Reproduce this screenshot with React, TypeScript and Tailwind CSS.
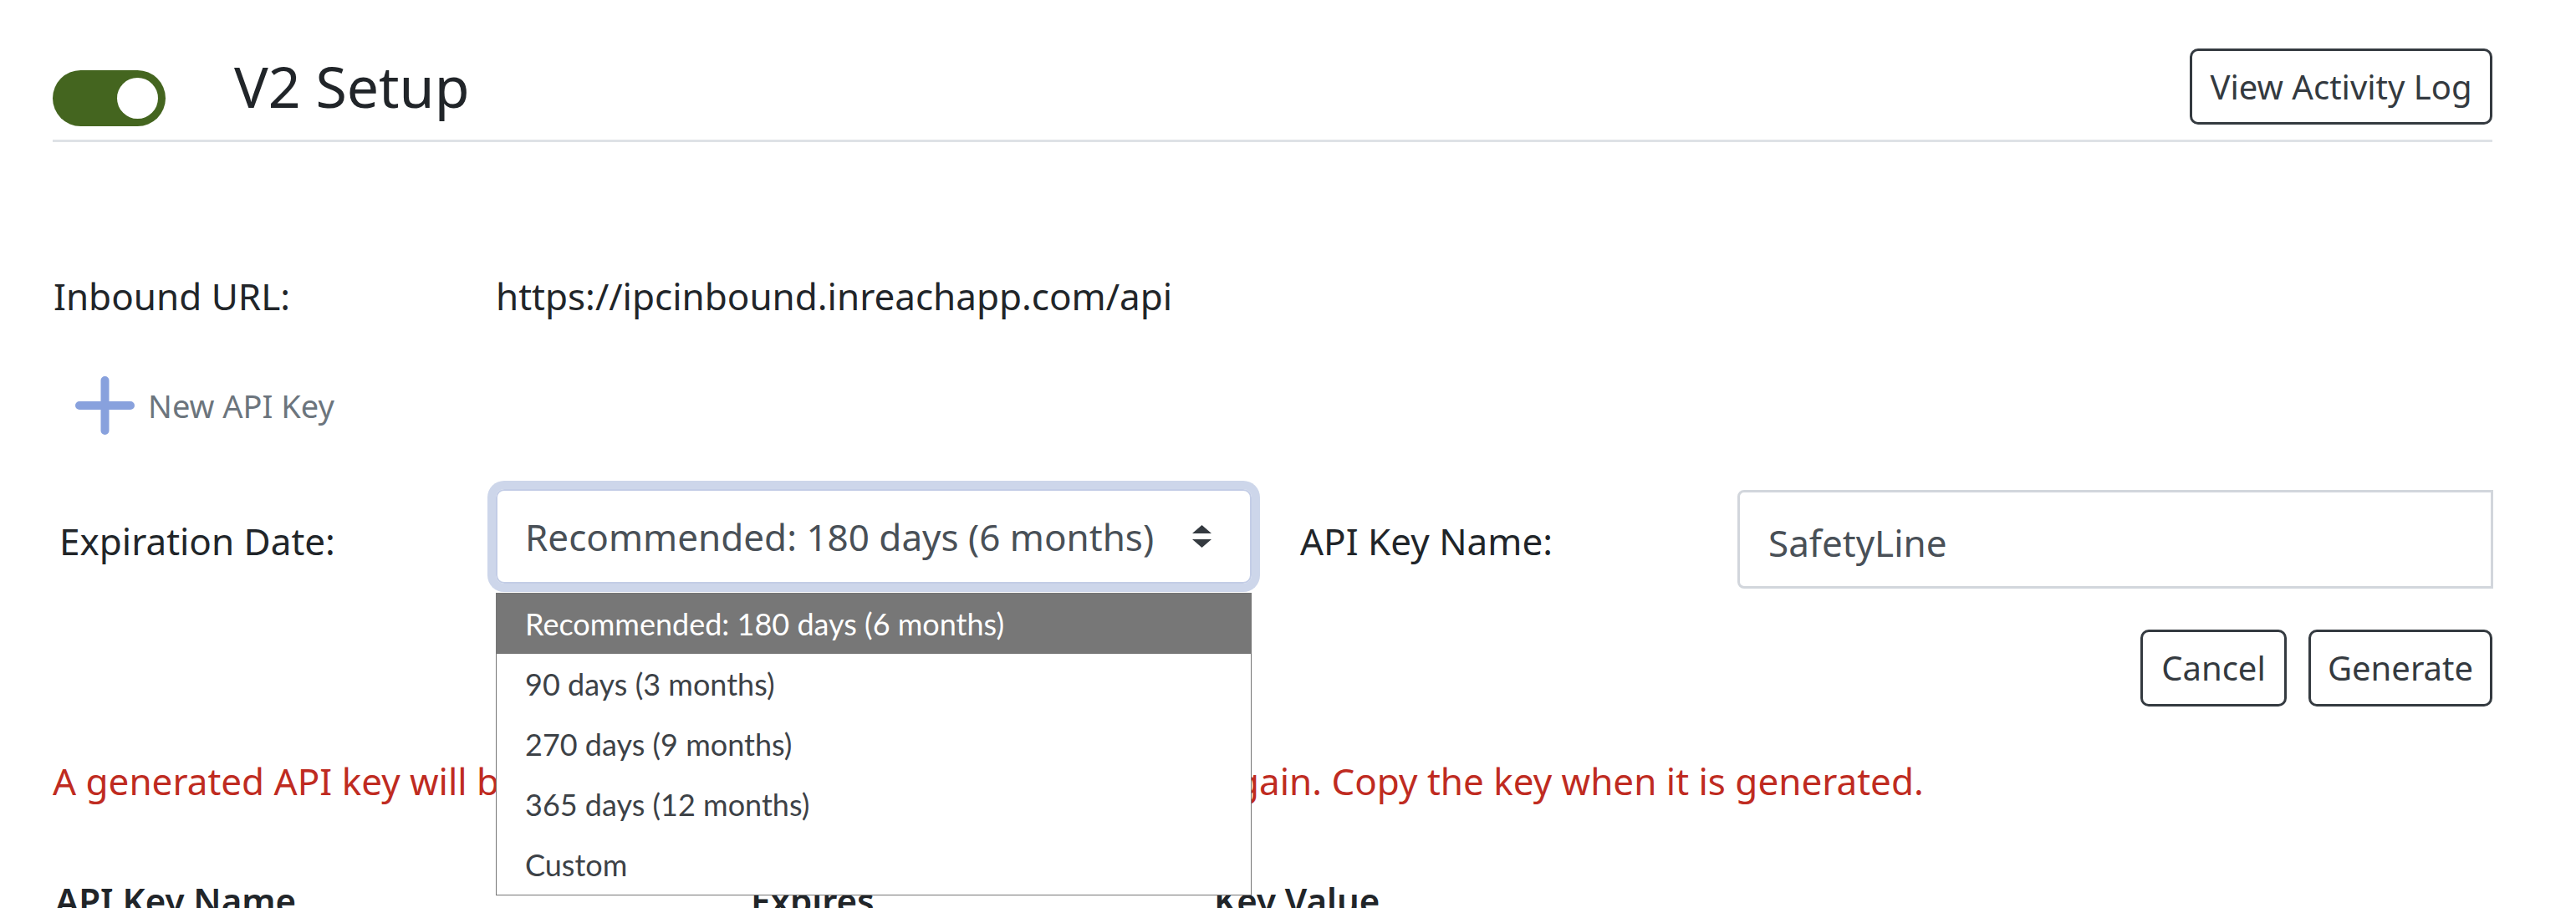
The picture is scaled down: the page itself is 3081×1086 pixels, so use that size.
const OPTIONS = [
  "Recommended: 180 days (6 months)",
  "90 days (3 months)",
  "270 days (9 months)",
  "365 days (12 months)",
  "Custom",
];

function Toggle() {
  return (
    <div className="mt-[26px] flex h-[67px] w-[135px] shrink-0 items-center justify-end rounded-full bg-[#44651f] pr-[9px]">
      <div className="h-[49px] w-[49px] rounded-full bg-white" />
    </div>
  );
}

function SortArrows() {
  return (
    <svg width="23" height="27" viewBox="0 0 23 27" className="shrink-0">
      <path d="M11.5 0 L23 10 L0 10 Z" fill="#343a40" />
      <path d="M0 17 L23 17 L11.5 27 Z" fill="#343a40" />
    </svg>
  );
}

function ExpirySelect() {
  return (
    <div className="relative w-[904px] shrink-0">
      <div className="flex h-[113px] items-center justify-between rounded-[10px] border-2 border-[#c3cde6] pl-[33px] pr-[46px] text-[44px] text-[#495057] shadow-[0_0_0_10px_#cdd6ea]">
        <span>Recommended: 180 days (6 months)</span>
        <SortArrows />
      </div>
      <ul className="absolute left-0 top-[124px] z-10 w-[904px] border border-[#767676] bg-white font-['Lato',sans-serif] text-[36px] leading-[72px] text-[#3d4247]">
        {OPTIONS.map((o, i) => (
          <li key={o} className={i === 0 ? "bg-[#777777] pl-[34px] text-white" : "pl-[34px]"}>
            {o}
          </li>
        ))}
      </ul>
    </div>
  );
}

export default function App() {
  return (
    <div className="min-h-screen bg-white font-['Noto_Sans',sans-serif] text-[#212529]">
      <div className="ml-[63px] w-[2918px] pt-[58px]">
        <header className="flex items-start border-b-[3px] border-[#dee2e6] pb-[16px]">
          <Toggle />
          <h1 className="ml-[82px] mt-[3px] text-[68px] leading-[84px]">V2 Setup</h1>
          <button className="ml-auto flex h-[91px] w-[362px] items-center justify-center rounded-[10px] border-[3px] border-[#343a40] text-[40px] text-[#343a40]">
            View Activity Log
          </button>
        </header>

        <div className="mt-[151px] flex text-[44px] leading-[66px]">
          <div className="w-[530px] pl-[1px]">Inbound URL:</div>
          <div>https://ipcinbound.inreachapp.com/api</div>
        </div>

        <button className="ml-[27px] mt-[63px] flex items-start gap-[16px] text-[38px] leading-[60px] text-[#6c757d]">
          <svg width="71" height="70" viewBox="0 0 71 70" className="shrink-0">
            <path d="M35.5 5 V65 M5 35 H66" stroke="#88a1dd" strokeWidth="10" strokeLinecap="round" fill="none" />
          </svg>
          <span className="mt-[5px]">New API Key</span>
        </button>

        <div className="mt-[65px] flex items-start pl-[8px] text-[44px] leading-[66px]">
          <div className="mt-[29px] w-[522px] shrink-0">Expiration Date:</div>
          <ExpirySelect />
          <div className="ml-[58px] mt-[29px] w-[523px] shrink-0">API Key Name:</div>
          <div className="mt-[1px] flex h-[118px] w-[904px] shrink-0 items-center rounded-l-[8px] border-[3px] border-[#d2d6dc] pl-[34px] pt-[7px] text-[#495057]">
            SafetyLine
          </div>
        </div>

        <div className="mt-[49px] flex justify-end gap-[26px] text-[40px] text-[#343a40]">
          <button className="h-[92px] w-[175px] rounded-[10px] border-[3px] border-[#343a40]">Cancel</button>
          <button className="h-[92px] w-[220px] rounded-[10px] border-[3px] border-[#343a40]">Generate</button>
        </div>

        <p className="mt-[56px] text-[44px] leading-[66px] text-[#bf2b21]">
          A generated API key will be shown only once and cannot be viewed again. Copy the key when it is generated.
        </p>

        <div className="mt-[77px] grid grid-cols-[835px_554px_1fr] text-[42px] font-semibold leading-[66px]">
          <div className="pl-[3px]">API Key Name</div>
          <div>Expires</div>
          <div>Key Value</div>
        </div>
      </div>
    </div>
  );
}
